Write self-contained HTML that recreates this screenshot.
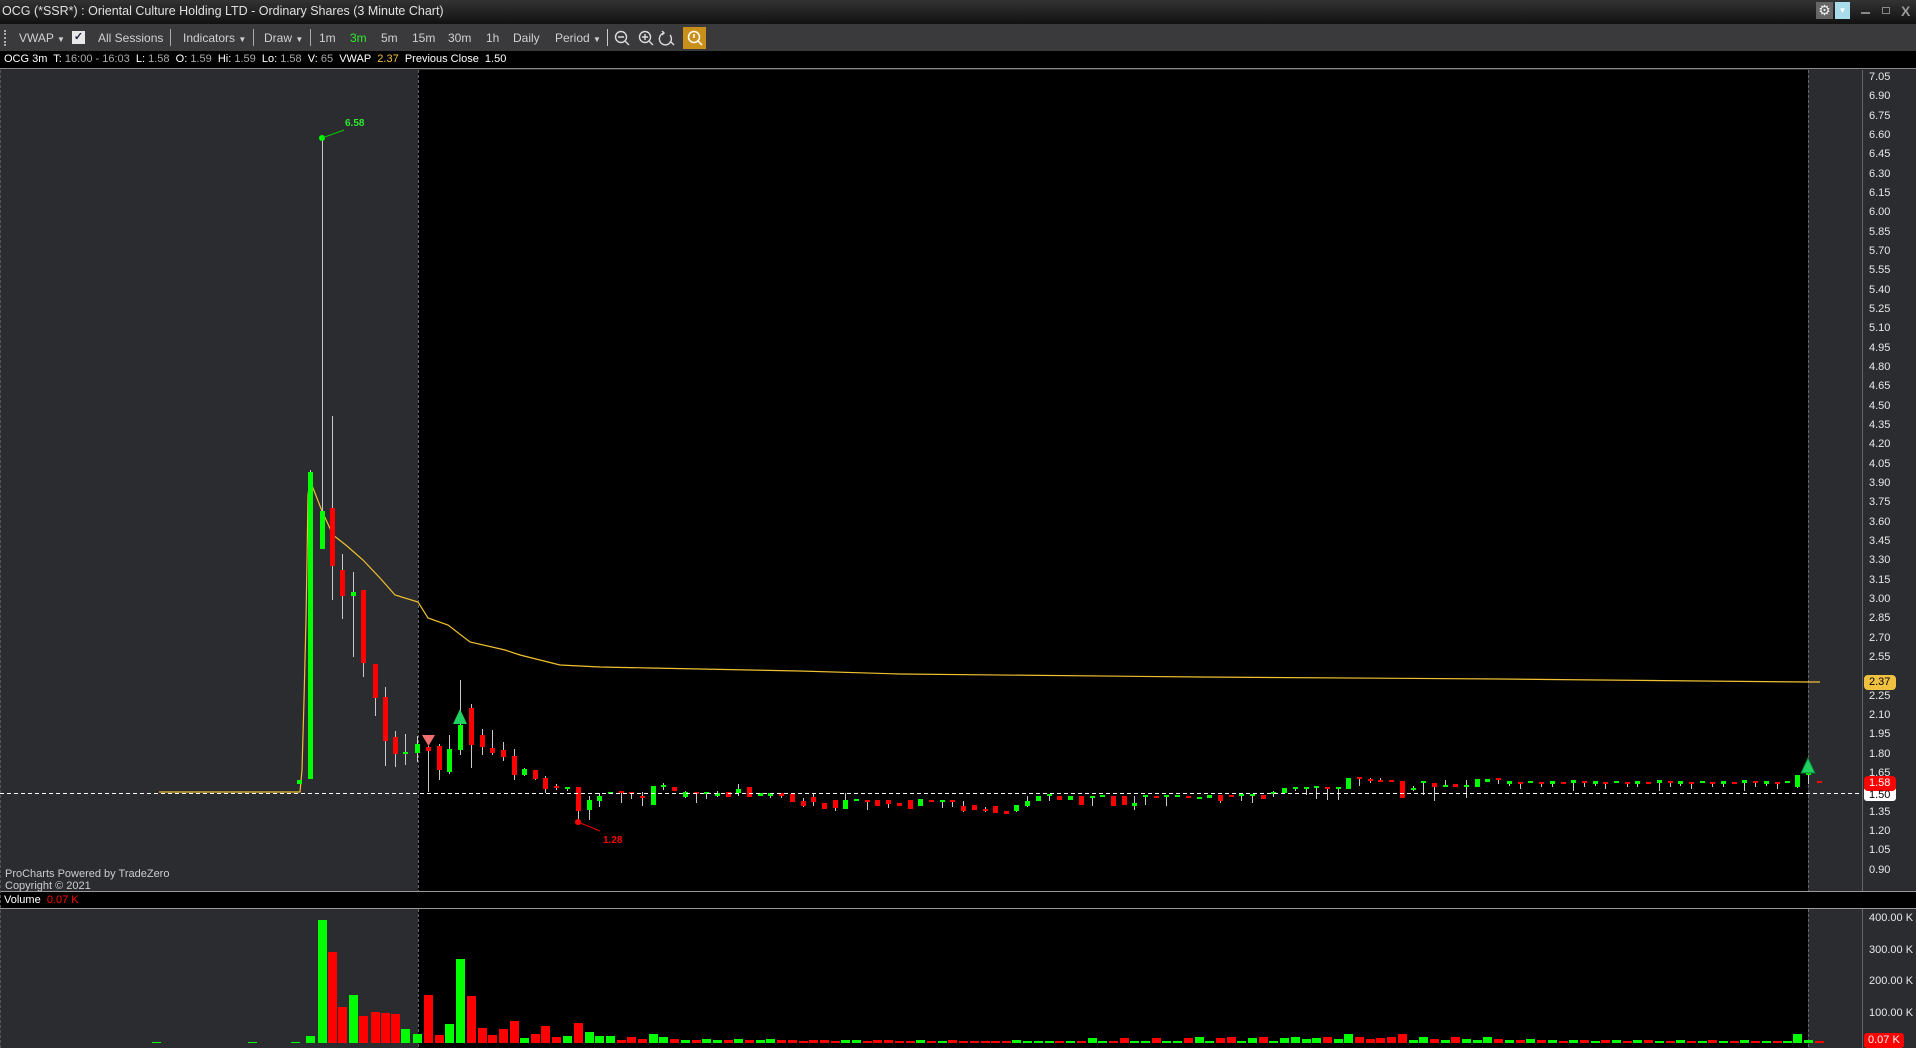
<!DOCTYPE html>
<html><head><meta charset="utf-8"><style>
*{margin:0;padding:0;box-sizing:border-box}
body{width:1916px;height:1048px;background:#2b2c30;overflow:hidden;font-family:"Liberation Sans",sans-serif;position:relative}
.abs{position:absolute;white-space:nowrap}
#title{left:0;top:0;width:1916px;height:24px;background:linear-gradient(#333,#111);}
#tb{left:0;top:24px;width:1916px;height:27px;background:#3a3a3c;}
#info{left:0;top:51px;width:1916px;height:18px;background:#000;border-bottom:1px solid #888}
.t{color:#d0d0d0;font-size:12px}
.ax{color:#e8e8e8;font-size:11px;left:1869px}
</style></head><body>
<div class="abs" id="title"></div>
<div class="abs t" style="left:2px;top:4px;font-size:12.5px;color:#e0e0e0">OCG (*SSR*) : Oriental Culture Holding LTD - Ordinary Shares (3 Minute Chart)</div>
<div class="abs" style="left:1816px;top:2px;width:17px;height:17px;background:#666;color:#eee;font-size:14px;text-align:center;line-height:17px">⚙</div>
<div class="abs" style="left:1835px;top:2px;width:15px;height:17px;background:#a8dcea;color:#fff;font-size:8px;text-align:center;line-height:17px">▼</div>
<div class="abs" style="left:1861px;top:12px;width:9px;height:2px;background:#888"></div>
<div class="abs" style="left:1882px;top:7px;width:8px;height:7px;border:1px solid #888"></div>
<div class="abs" style="left:1901px;top:3px;color:#999;font-size:14px;font-weight:bold">X</div>
<div class="abs" id="tb"></div>
<div class="abs" style="left:4px;top:30px;width:2px;height:16px;border-left:2px dotted #aaa"></div>
<div class="abs t" style="left:19px;top:31px">VWAP <span style="font-size:8px">▼</span></div>
<div class="abs" style="left:72px;top:31px;width:13px;height:13px;background:#e8e8e8;color:#224;font-size:11px;line-height:13px;text-align:center;font-weight:bold">✓</div>
<div class="abs t" style="left:98px;top:31px">All Sessions</div>
<div class="abs" style="left:170px;top:29px;width:1px;height:17px;background:#aaa"></div>
<div class="abs t" style="left:183px;top:31px">Indicators <span style="font-size:8px">▼</span></div>
<div class="abs" style="left:253px;top:29px;width:1px;height:17px;background:#aaa"></div>
<div class="abs t" style="left:264px;top:31px">Draw <span style="font-size:8px">▼</span></div>
<div class="abs" style="left:310px;top:29px;width:1px;height:17px;background:#aaa"></div>
<div class="abs t" style="left:319px;top:31px">1m</div>
<div class="abs t" style="left:350px;top:31px;color:#2ee82e">3m</div>
<div class="abs t" style="left:381px;top:31px">5m</div>
<div class="abs t" style="left:412px;top:31px">15m</div>
<div class="abs t" style="left:448px;top:31px">30m</div>
<div class="abs t" style="left:486px;top:31px">1h</div>
<div class="abs t" style="left:513px;top:31px">Daily</div>
<div class="abs t" style="left:555px;top:31px">Period <span style="font-size:8px">▼</span></div>
<div class="abs" style="left:607px;top:29px;width:1px;height:17px;background:#ccc"></div>
<svg class="abs" style="left:612px;top:27px" width="100" height="22" viewBox="0 0 100 22">
<g fill="none" stroke="#ddd" stroke-width="1.4"><circle cx="9" cy="10" r="5.5"/><path d="M6 10h6M13 14l4 4"/>
<circle cx="33" cy="10" r="5.5"/><path d="M30 10h6M33 7v6M37 14l4 4"/>
<path d="M52 6a6 6 0 1 0 6 2M50 4l2 2-2 2M58 14l4 4"/></g>
<rect x="71" y="0" width="23" height="22" fill="#c8901a"/><circle cx="82" cy="10" r="5.5" fill="none" stroke="#fff" stroke-width="1.5"/><path d="M82 7v4M86 14l4 4" stroke="#fff" stroke-width="1.5"/></svg>
<div class="abs" id="info"></div>
<div class="abs" style="left:4px;top:53px;font-size:11px;color:#fff">OCG 3m&nbsp; T: <span style="color:#aaa">16:00 - 16:03</span>&nbsp; L: <span style="color:#aaa">1.58</span>&nbsp; O: <span style="color:#aaa">1.59</span>&nbsp; Hi: <span style="color:#aaa">1.59</span>&nbsp; Lo: <span style="color:#aaa">1.58</span>&nbsp; V: <span style="color:#aaa">65</span>&nbsp; VWAP&nbsp; <span style="color:#f0c040">2.37</span>&nbsp; Previous Close&nbsp; 1.50</div>

<svg class="abs" style="left:0;top:0" width="1916" height="1048" id="ch">
<rect x="418" y="70" width="1390" height="821" fill="#000"/>
<rect x="418" y="909" width="1390" height="139" fill="#000"/>
<rect x="0" y="891" width="1916" height="18" fill="#000"/>
<line x1="0" y1="891.5" x2="1916" y2="891.5" stroke="#999"/>
<line x1="0" y1="908.5" x2="1916" y2="908.5" stroke="#999"/>
<line x1="1862.5" y1="70" x2="1862.5" y2="891" stroke="#666"/>
<line x1="1862.5" y1="909" x2="1862.5" y2="1048" stroke="#666"/>
<line x1="418.5" y1="70" x2="418.5" y2="891" stroke="#666" stroke-dasharray="3,2"/>
<line x1="1808.5" y1="70" x2="1808.5" y2="891" stroke="#666" stroke-dasharray="3,2"/>
<line x1="418.5" y1="909" x2="418.5" y2="1048" stroke="#666" stroke-dasharray="3,2"/>
<line x1="1808.5" y1="909" x2="1808.5" y2="1048" stroke="#666" stroke-dasharray="3,2"/>
<line x1="0.5" y1="70" x2="0.5" y2="1048" stroke="#555" stroke-dasharray="3,2"/>
<polyline fill="none" stroke="#f0c030" stroke-width="1.2" points="159,792 300,792 302,770 304,700 306,620 307,560 308,495 310,480 313,488 322,511 333,535 347,546 363,560 380,578 395,595 418,602 428,618 448,625 470,642 505,650 520,655 540,660 560,665 600,667 650,668 700,669 800,671 900,674 1200,677 1500,679 1700,681 1808,682 1820,682"/>
<g id="cd"></g>
<line x1="0" y1="793.5" x2="1862" y2="793.5" stroke="#fff" stroke-dasharray="4,3"/>
<polygon points="422,735 435,735 428.5,746" fill="#f07070"/>
<polygon points="453,724 467,724 460,709" fill="#20d060"/>
<polygon points="1801,773 1815,773 1808,758" fill="#20d060" stroke="#083" />
<circle cx="322" cy="138" r="3" fill="#0f0"/><line x1="322" y1="138" x2="344" y2="130" stroke="#0c0"/>
<text x="345" y="126" fill="#2ee82e" font-size="10" font-weight="bold" font-family="Liberation Sans">6.58</text>
<circle cx="578" cy="822" r="3" fill="#f00"/><line x1="578" y1="822" x2="600" y2="831" stroke="#e00"/>
<text x="603" y="843" fill="#f00" font-size="10" font-weight="bold" font-family="Liberation Sans">1.28</text>
<rect x="1864" y="675" width="32" height="15" rx="4" fill="#f0c040"/>
<rect x="1864" y="787" width="32" height="14" rx="3" fill="#fff"/>
<rect x="1864" y="776" width="32" height="15" rx="4" fill="#f00"/>
<rect x="1864" y="1033" width="40" height="15" rx="3" fill="#f00"/>
</svg>

<div class="abs ax" style="top:71px">7.05</div><div class="abs ax" style="top:90px">6.90</div><div class="abs ax" style="top:110px">6.75</div><div class="abs ax" style="top:129px">6.60</div><div class="abs ax" style="top:148px">6.45</div><div class="abs ax" style="top:168px">6.30</div><div class="abs ax" style="top:187px">6.15</div><div class="abs ax" style="top:206px">6.00</div><div class="abs ax" style="top:226px">5.85</div><div class="abs ax" style="top:245px">5.70</div><div class="abs ax" style="top:264px">5.55</div><div class="abs ax" style="top:284px">5.40</div><div class="abs ax" style="top:303px">5.25</div><div class="abs ax" style="top:322px">5.10</div><div class="abs ax" style="top:342px">4.95</div><div class="abs ax" style="top:361px">4.80</div><div class="abs ax" style="top:380px">4.65</div><div class="abs ax" style="top:400px">4.50</div><div class="abs ax" style="top:419px">4.35</div><div class="abs ax" style="top:438px">4.20</div><div class="abs ax" style="top:458px">4.05</div><div class="abs ax" style="top:477px">3.90</div><div class="abs ax" style="top:496px">3.75</div><div class="abs ax" style="top:516px">3.60</div><div class="abs ax" style="top:535px">3.45</div><div class="abs ax" style="top:554px">3.30</div><div class="abs ax" style="top:574px">3.15</div><div class="abs ax" style="top:593px">3.00</div><div class="abs ax" style="top:612px">2.85</div><div class="abs ax" style="top:632px">2.70</div><div class="abs ax" style="top:651px">2.55</div><div class="abs ax" style="top:690px">2.25</div><div class="abs ax" style="top:709px">2.10</div><div class="abs ax" style="top:728px">1.95</div><div class="abs ax" style="top:748px">1.80</div><div class="abs ax" style="top:767px">1.65</div><div class="abs ax" style="top:806px">1.35</div><div class="abs ax" style="top:825px">1.20</div><div class="abs ax" style="top:844px">1.05</div><div class="abs ax" style="top:864px">0.90</div>
<div class="abs ax" style="top:676px;color:#000">2.37</div>
<div class="abs ax" style="top:789px;color:#000">1.50</div>
<div class="abs ax" style="top:777px;color:#fff">1.58</div>
<div class="abs ax" style="top:912px;left:1869px">400.00 K</div>
<div class="abs ax" style="top:944px;left:1869px">300.00 K</div>
<div class="abs ax" style="top:975px;left:1869px">200.00 K</div>
<div class="abs ax" style="top:1007px;left:1869px">100.00 K</div>
<div class="abs ax" style="top:1034px;left:1868px;color:#fff">0.07 K</div>
<div class="abs" style="left:5px;top:868px;font-size:11px;color:#ccc">ProCharts Powered by TradeZero</div>
<div class="abs" style="left:5px;top:880px;font-size:11px;color:#ccc">Copyright © 2021</div>
<div class="abs" style="left:4px;top:894px;font-size:11px;color:#fff">Volume&nbsp; <span style="color:#f00">0.07 K</span></div>

<script>
var C=[
[299,'g',780,784],
[310,'g',472,779,470,779],[322,'g',511,549,137,549],[332,'r',508,566,416,600],[342,'r',570,596,554,619],[353,'g',592,596,572,657],[363,'r',590,663,590,677],[375,'r',664,698,664,716],[385,'r',697,741,687,766],[395,'r',737,754,731,767],[405,'g',752,754,734,765],[417,'g',744,753,736,762],
[428,'r',747,751,746,792],[439,'r',746,770,744,780],[449,'g',749,772,735,774],[460,'g',725,750,680,755],[471,'r',708,745,704,768],[482,'r',735,747,729,755],[492,'r',748,753,730,755],[503,'r',750,757,742,761],[514,'r',756,775,749,780],[524,'g',769,775,768,776],[535,'r',770,779,770,780],[545,'r',778,789,776,793],[556,'r',786,788,784,790],[567,'g',787,789,787,791],[578,'r',787,811,787,819],[589,'g',800,810,796,820],[599,'g',796,801,793,807],
[610,'g',792,794],[621,'r',791,793,791,803],[631,'r',792,794,792,799],[642,'r',796,798,792,806],[653,'g',786,805],[663,'g',785,787,783,790],[674,'r',787,791],[685,'g',792,797,791,798],[696,'r',792,794,792,803],[706,'g',792,794,792,799],[717,'g',793,796,791,797],[728,'r',792,797],[738,'g',789,793,784,796],[749,'r',787,797],[760,'g',793,796],[770,'g',793,796,793,798],[781,'r',793,796,793,798],[792,'r',794,802],[803,'r',801,806,798,807],[813,'r',797,802,793,806],[824,'r',803,809],[835,'r',800,808,800,811],[845,'g',800,809,793,809],[856,'g',799,801],[867,'r',800,802,800,810],[877,'r',800,806],[888,'r',800,804,800,808],[899,'r',803,806],[910,'r',800,809],[920,'g',799,806],[931,'r',800,802],[942,'g',800,802,800,808],[952,'r',800,802,800,807],[963,'r',806,811,801,812],[974,'r',805,810],[985,'r',809,811,807,812],[995,'r',806,813],[1006,'r',811,814],
[1016,'g',805,811,805,812],[1027,'g',801,806,796,807],[1038,'g',796,801],[1049,'g',794,796,794,801],[1059,'r',796,800],[1070,'g',796,800],[1081,'r',796,805],[1092,'g',796,798,796,806],[1102,'g',795,797],[1113,'r',796,806],[1124,'r',796,805],[1134,'g',803,806,796,810],[1145,'g',795,797,795,805],[1156,'r',796,798],[1166,'g',795,797,795,806],[1177,'g',795,797],[1188,'r',796,798],[1199,'g',797,799],[1209,'g',795,798],[1220,'r',795,801,795,803],[1231,'r',795,797],[1241,'g',794,796,794,801],[1252,'g',794,796,794,803],[1263,'r',795,799],[1273,'g',792,793,791,797],[1284,'g',788,793],[1295,'g',787,789,787,791],[1306,'g',787,789,787,795],[1316,'g',786,788,786,799],[1327,'r',787,789,787,800],[1338,'g',787,789,787,800],[1348,'g',778,789],[1359,'r',777,779,777,786],[1370,'r',779,781,778,783],[1380,'r',780,782,778,782],[1391,'r',780,782],[1402,'r',781,798],[1413,'g',788,790,786,791],[1423,'g',781,783,781,795],[1434,'r',783,787,783,801],[1445,'g',785,787,780,787],[1455,'r',784,787],[1466,'g',785,787,780,798],[1477,'g',779,787],[1487,'g',779,782],[1498,'r',778,780,778,784]
];
var x=1509,k=0;
var pat=[['g',781,784,781,786],['r',782,784,782,789],['g',781,783],['r',782,784,782,787],['g',781,784,781,787],['r',782,784],['g',780,783,780,791],['r',781,783,781,787]];
while(x<1790){var p=pat[k%8];C.push([Math.round(x),p[0],p[1],p[2],p[3],p[4]]);x+=10.7;k++;}
C.push([1797,'g',775,787,775,788]);C.push([1808,'g',773,775,773,784]);C.push([1819,'r',781,783]);
var s='';
C.forEach(function(c,i){var X=c[0],col=c[1]=='g'?'#00ff00':'#ff0000',t=c[2],b=c[3],wt=c[4]||t,wb=c[5]||b;
if(wt<t||wb>b)s+='<line x1="'+(X+0.5)+'" y1="'+wt+'" x2="'+(X+0.5)+'" y2="'+wb+'" stroke="#c8c8c8"/>';
s+='<rect x="'+(X-2)+'" y="'+t+'" width="5" height="'+Math.max(2,b-t)+'" fill="'+col+'"/>';});
var V=[[156,'g',1042],[252,'g',1042],[295,'g',1042],[310,'g',1036],[322,'g',920],[332,'r',952],[342,'r',1007],[353,'g',995],[363,'r',1016],[375,'r',1012],[385,'r',1013],[395,'r',1014],[405,'g',1029],[417,'g',1034],[428,'r',995],[439,'r',1035],[449,'g',1024],[460,'g',959],[471,'r',996],[482,'r',1028],[492,'r',1035],[503,'r',1029],[514,'r',1021],[524,'g',1038],[535,'r',1034],[545,'r',1026],[556,'r',1037],[567,'g',1036],[578,'r',1023],[589,'g',1032],[599,'g',1036],[610,'g',1036]];
C.forEach(function(c){if(c[0]>615){var h=[3,2,4,2,5,3,2,6][c[0]%8];if(c[0]==653||c[0]==1348||c[0]==1402||c[0]==1797)h=9;V.push([c[0],c[1],1043-h]);}});
V.forEach(function(v){s+='<rect x="'+(v[0]-4)+'" y="'+v[2]+'" width="9" height="'+(1043-v[2])+'" fill="'+(v[1]=='g'?'#00ff00':'#ff0000')+'"/>';});
document.getElementById('cd').innerHTML=s;
</script>
</body></html>
